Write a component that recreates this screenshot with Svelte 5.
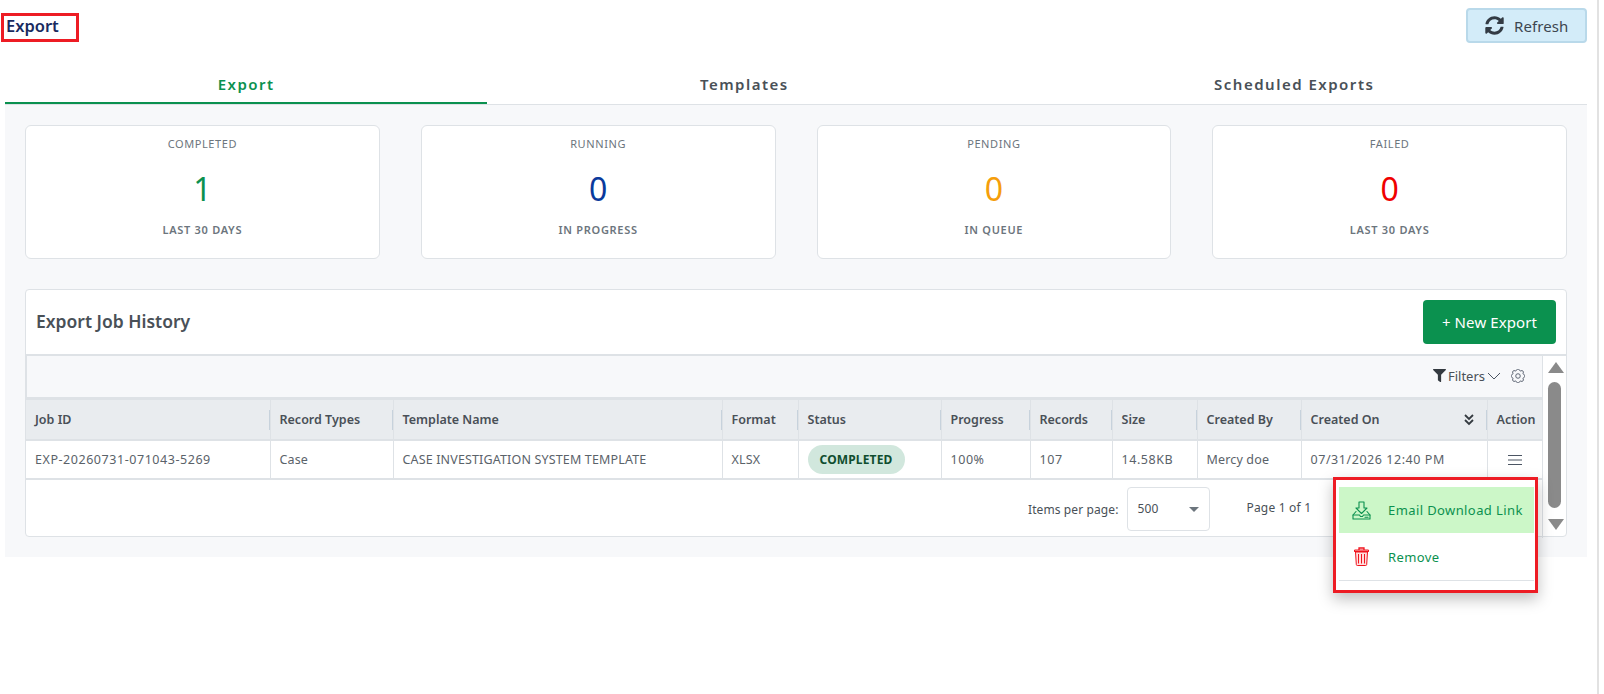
<script>
  const stats = [
    { label: 'Completed', value: 1, note: 'Last 30 days', color: '#0b914f' },
    { label: 'Running', value: 0, note: 'In progress', color: '#0a3a9c' },
    { label: 'Pending', value: 0, note: 'In queue', color: '#f59e0b' },
    { label: 'Failed', value: 0, note: 'Last 30 days', color: '#f00000' }
  ];
  const columns = [
    { name: 'Job ID', width: 244 },
    { name: 'Record Types', width: 123 },
    { name: 'Template Name', width: 329 },
    { name: 'Format', width: 76 },
    { name: 'Status', width: 143 },
    { name: 'Progress', width: 89 },
    { name: 'Records', width: 82 },
    { name: 'Size', width: 85 },
    { name: 'Created By', width: 104 },
    { name: 'Created On', width: 186, sort: true },
    { name: 'Action', width: 55 }
  ];
  const row = ['EXP-20260731-071043-5269', 'Case', 'CASE INVESTIGATION SYSTEM TEMPLATE', 'XLSX', null, '100%', '107', '14.58KB', 'Mercy doe', '07/31/2026 12:40 PM', 'menu'];
  const tabs = ['Export', 'Templates', 'Scheduled Exports'];
  // digits are narrower in this font than in the original, so these cells get some tracking
  const isNumeric = cell => /\d/.test(cell);
</script>

<div class="page">
  <header class="top">
    <h1 class="title">Export</h1>
    <button class="refresh">
      <svg width="19" height="19" viewBox="0 0 512 512"><path fill="#333b44" d="M370.72 133.28C339.458 104.008 298.888 87.962 255.848 88c-77.458.068-144.328 53.178-162.791 126.85-1.344 5.363-6.122 9.15-11.651 9.15H24.103c-7.498 0-13.194-6.807-11.807-14.176C33.933 94.924 134.813 8 256 8c66.448 0 126.791 26.136 171.315 68.685L463.03 40.97C478.149 25.851 504 36.559 504 57.941V192c0 13.255-10.745 24-24 24H345.941c-21.382 0-32.09-25.851-16.971-40.971l41.75-41.749zM32 296h134.059c21.382 0 32.09 25.851 16.971 40.971l-41.75 41.75c31.262 29.273 71.835 45.319 114.876 45.28 77.418-.07 144.315-53.144 162.787-126.849 1.344-5.363 6.122-9.15 11.651-9.15h57.304c7.498 0 13.194 6.807 11.807 14.176C478.067 417.076 377.187 504 256 504c-66.448 0-126.791-26.136-171.315-68.685L48.97 471.03C33.851 486.149 8 475.441 8 454.059V320c0-13.255 10.745-24 24-24z"/></svg>
      Refresh
    </button>
  </header>

  <nav class="tabs">
    {#each tabs as tab, i}
      <div class="tab" class:active={i === 0}>{tab}</div>
    {/each}
  </nav>

  <main class="body">
    <section class="stats">
      {#each stats as s}
        <div class="stat">
          <div class="stat-label">{s.label}</div>
          <div class="stat-value" style="color: {s.color}">{s.value}</div>
          <div class="stat-note">{s.note}</div>
        </div>
      {/each}
    </section>

    <section class="panel">
      <div class="panel-head">
        <h2>Export Job History</h2>
        <button class="new">+ New Export</button>
      </div>
      <div class="panel-main">
        <div class="grid">
          <div class="filterbar">
            <svg width="13" height="13" viewBox="0 0 512 512"><path fill="#343a40" d="M487.976 0H24.028C2.71 0-8.047 25.866 7.058 40.971L192 225.941V432c0 7.831 3.821 15.17 10.237 19.662l80 55.98C298.02 518.69 320 507.493 320 487.98V225.941l184.947-184.97C520.021 25.896 509.338 0 487.976 0z"/></svg>
            <span class="filters">Filters</span>
            <svg class="chev" width="14" height="8" viewBox="0 0 14 8"><path d="M1 1l6 6 6-6" fill="none" stroke="#4b5563" stroke-width="1"/></svg>
            <svg class="gear" width="14" height="14" viewBox="0 0 16 16" fill="none" stroke="#4b5563" stroke-width="1"><circle cx="8" cy="8" r="2.6"/><path d="M9.796 1.343c-.527-1.79-3.065-1.79-3.592 0l-.094.319a.873.873 0 0 1-1.255.52l-.292-.16c-1.64-.892-3.433.902-2.54 2.541l.159.292a.873.873 0 0 1-.52 1.255l-.319.094c-1.79.527-1.79 3.065 0 3.592l.319.094a.873.873 0 0 1 .52 1.255l-.16.292c-.892 1.64.901 3.434 2.541 2.54l.292-.159a.873.873 0 0 1 1.255.52l.094.319c.527 1.79 3.065 1.79 3.592 0l.094-.319a.873.873 0 0 1 1.255-.52l.292.16c1.64.893 3.434-.902 2.54-2.541l-.159-.292a.873.873 0 0 1 .52-1.255l.319-.094c1.79-.527 1.79-3.065 0-3.592l-.319-.094a.873.873 0 0 1-.52-1.255l.16-.292c.893-1.64-.902-3.433-2.541-2.54l-.292.159a.873.873 0 0 1-1.255-.52z"/></svg>
          </div>
          <table>
            <colgroup>
              {#each columns as c}<col style="width: {c.width}px" />{/each}
            </colgroup>
            <thead>
              <tr>
                {#each columns as c}
                  <th>
                    {c.name}
                    {#if c.sort}
                      <svg class="sort" width="12" height="13" viewBox="0 0 12 13" fill="none" stroke="#343a40" stroke-width="1.8"><path d="M2 2l4 4 4-4M2 7l4 4 4-4"/></svg>
                    {/if}
                  </th>
                {/each}
              </tr>
            </thead>
            <tbody>
              <tr>
                {#each row as cell}
                  {#if cell === null}
                    <td><span class="badge">COMPLETED</span></td>
                  {:else if cell === 'menu'}
                    <td class="action">
                      <svg width="14" height="12" viewBox="0 0 14 12" stroke="#4b5563" stroke-width="1"><path d="M0 1.500h14M0 6h14M0 10.500h14"/></svg>
                    </td>
                  {:else}
                    <td class:num={isNumeric(cell)}>{cell}</td>
                  {/if}
                {/each}
              </tr>
            </tbody>
          </table>
          <div class="pager">
            <span class="ipp">Items per page:</span>
            <div class="select">500<i class="caret"></i></div>
            <span class="range">Page 1 of 1</span>
          </div>
        </div>
        <div class="scroll">
          <i class="up"></i>
          <i class="thumb"></i>
          <i class="down"></i>
        </div>
      </div>
    </section>
  </main>

  <div class="menu-mark">
    <div class="menu">
      <div class="item on">
        <svg width="19" height="19" viewBox="0 0 19 19" fill="none" stroke="#0b914f" stroke-width="1.100" stroke-linejoin="round" stroke-linecap="round"><path d="M7 1h5v6h3l-5.500 5.500L4 7h3z"/><path d="M4 10.500L1 14v4h17v-4l-3-3.500"/><path d="M1 14h6.500l1 1.500h2l1-1.500H18"/><path d="M13 16.200h3"/></svg>
        Email Download Link
      </div>
      <div class="item">
        <svg width="19" height="19" viewBox="-1 0 19 19" fill="none" stroke="#f0141e" stroke-width="1"><path d="M1 4h15M6 3V1h5v2" stroke-width="1.300"/><path d="M1.500 3h14v1.500h-14z" fill="#fbb"/><path d="M2.500 5l.8 12.500q.1 1 1 1h8.400q.9 0 1-1L14.500 5z" fill="#fdd"/><path d="M5.500 7v9.500M8.500 7v9.500M11.500 7v9.500"/></svg>
        Remove
      </div>
    </div>
  </div>
  <div class="edge"></div>
</div>

<style>
  :global(body) {
    margin: 0;
    background: #fff;
    font-family: "Noto Sans", "Open Sans", sans-serif;
    color: #343a40;
  }
  .page {
    position: relative;
    height: 694px;
    overflow: hidden;
  }
  .edge {
    position: absolute;
    left: 1597px;
    top: 0;
    bottom: 0;
    width: 2px;
    background: #e2e2e2;
  }
  .top {
    display: flex;
    justify-content: space-between;
    align-items: flex-start;
    height: 64px;
    padding: 8px 17px 0 1px;
    box-sizing: border-box;
  }
  .title {
    box-sizing: border-box;
    width: 78px;
    height: 29px;
    margin: 5px 0 0;
    padding-left: 2px;
    border: 3px solid #ed1c24;
    font-size: 16.500px;
    line-height: 19px;
    font-weight: 600;
    color: #1a2b5f;
  }
  .refresh {
    display: flex;
    align-items: center;
    gap: 10px;
    box-sizing: border-box;
    width: 121px;
    height: 35px;
    padding: 0 0 0 17px;
    background: #d3ecf9;
    border: 2px solid #b9d9ea;
    border-radius: 4px;
    font: 15px "Noto Sans", sans-serif;
    letter-spacing: .1px;
    color: #3d4650;
  }
  .tabs {
    display: flex;
    margin: 0 17px 0 5px;
    height: 41px;
    border-bottom: 1px solid #dee2e6;
    box-sizing: border-box;
  }
  .tab {
    box-sizing: border-box;
    flex: 1 1 auto;
    text-align: center;
    padding-top: 10px;
    font-size: 15px;
    font-weight: 600;
    letter-spacing: 1.500px;
    color: #495057;
  }
  .tab.active {
    color: #0b914f;
    border-bottom: 2px solid #0b914f;
    height: 40px;
  }
  .body {
    margin: 0 17px 0 5px;
    height: 452px;
    padding: 20px;
    box-sizing: border-box;
    background: #f7f8fa;
  }
  .stats {
    display: grid;
    grid-template-columns: repeat(4, 1fr);
    gap: 41px;
  }
  .stat {
    box-sizing: border-box;
    height: 134px;
    padding-top: 11px;
    background: #fff;
    border: 1px solid #dee2e6;
    border-radius: 6px;
    text-align: center;
    text-transform: uppercase;
  }
  .stat-label {
    font-size: 11px;
    line-height: 14px;
    letter-spacing: .6px;
    color: #6c757d;
  }
  .stat-value {
    margin-top: 19px;
    font-size: 32px;
    line-height: 38px;
  }
  .stat-note {
    margin-top: 15px;
    font-size: 11px;
    line-height: 14px;
    font-weight: 600;
    letter-spacing: .7px;
    color: #6c757d;
  }
  .panel {
    box-sizing: border-box;
    height: 248px;
    margin-top: 30px;
    background: #fff;
    border: 1px solid #dee2e6;
    border-radius: 4px;
  }
  .panel-head {
    box-sizing: border-box;
    display: flex;
    justify-content: space-between;
    align-items: center;
    height: 66px;
    padding: 0 10px 1px 10px;
    border-bottom: 2px solid #dee2e6;
  }
  h2 {
    margin: -2px 0 0;
    font-size: 17.500px;
    font-weight: 600;
    color: #495057;
  }
  .new {
    width: 133px;
    height: 44px;
    background: #0b914f;
    border: 0;
    border-radius: 4px;
    color: #fff;
    font: 15px "Noto Sans", sans-serif;
    letter-spacing: .1px;
  }
  .panel-main {
    display: flex;
  }
  .grid {
    width: 1516px;
    position: relative;
  }
  .filterbar {
    box-sizing: border-box;
    display: flex;
    align-items: center;
    justify-content: flex-end;
    height: 44px;
    padding: 0 17px 2px 0;
    background: #f7f8fa;
    border-bottom: 3px solid #dee2e6;
    border-left: 1px solid #dee2e6;
    font-size: 13px;
    color: #495057;
  }
  .filters { margin-left: 2px; }
  .chev { margin-left: 2px; }
  .gear { margin-left: 10px; }
  table {
    width: 100%;
    table-layout: fixed;
    border-collapse: collapse;
  }
  th, td {
    box-sizing: border-box;
    padding: 0 8px 0 9px;
    text-align: left;
    font-size: 12.500px;
    white-space: nowrap;
    overflow: hidden;
  }
  th {
    position: relative;
    height: 40px;
    background: #e9ecef;
    font-weight: 600;
    color: #495057;
    border-bottom: 2px solid #dee2e6;
    border-right: 1px solid #dee2e6;
  }
  th:not(:last-child)::after {
    content: "";
    position: absolute;
    right: -1px;
    top: 10px;
    height: 20px;
    width: 2px;
    background: #c7d2dc;
  }
  th:last-child, td:last-child { border-right: 0; }
  td {
    height: 39px;
    color: #5a6269;
    letter-spacing: .15px;
    border-bottom: 2px solid #dee2e6;
    border-right: 1px solid #dee2e6;
  }
  td.num { letter-spacing: .55px; }
  .sort {
    position: absolute;
    right: 12px;
    top: 13px;
  }
  .badge {
    display: inline-block;
    width: 97px;
    height: 29px;
    line-height: 29px;
    text-align: center;
    border-radius: 15px;
    background: #d1e7dd;
    color: #0f4d2f;
    font-size: 12px;
    font-weight: 700;
    letter-spacing: .15px;
  }
  .action { text-align: center; padding: 0; }
  .action svg { display: block; margin: 0 auto; }
  .pager {
    display: flex;
    align-items: center;
    height: 58px;
    font-size: 12px;
    letter-spacing: .1px;
    color: #495057;
    padding-left: 1002px;
  }
  .select {
    position: relative;
    box-sizing: border-box;
    width: 83px;
    height: 44px;
    margin-left: 9px;
    padding-left: 9px;
    border: 1px solid #dee2e6;
    border-radius: 4px;
    line-height: 42px;
    background: #fff;
  }
  .caret {
    position: absolute;
    right: 10px;
    top: 19px;
    border: 5px solid transparent;
    border-top-color: #6c757d;
  }
  .range {
    margin: -4px 0 0 36px;
    letter-spacing: .2px;
  }
  .scroll {
    flex: 1;
    position: relative;
    border-left: 1px solid #dee2e6;
  }
  .up, .down, .thumb { position: absolute; display: block; left: 5px; }
  .up {
    top: 6px;
    border: 8px solid transparent;
    border-top: 0;
    border-bottom: 11px solid #8a8a8a;
  }
  .thumb {
    left: 5px;
    top: 26px;
    width: 13px;
    height: 126px;
    border-radius: 7px;
    background: #8a8a8a;
  }
  .down {
    top: 163px;
    border: 8px solid transparent;
    border-bottom: 0;
    border-top: 11px solid #8a8a8a;
  }
  .menu-mark {
    position: absolute;
    left: 1333px;
    top: 477px;
    box-sizing: border-box;
    width: 205px;
    height: 116px;
    padding: 0 1px 1px 3px;
    border: 3px solid #ed1c24;
    background: #fff;
    box-shadow: 0 6px 14px rgba(0, 0, 0, .25);
  }
  .menu {
    box-sizing: border-box;
    height: 100%;
    padding-top: 7px;
    background: #fff;
  }
  .item {
    display: flex;
    align-items: center;
    gap: 17px;
    height: 46px;
    padding-left: 13px;
    font-size: 13px;
    letter-spacing: .4px;
    color: #0b914f;
  }
  .item.on {
    background: #ccf7c8;
  }
  .item:last-child {
    height: 47px;
    border-bottom: 1px solid #dee2e6;
  }
</style>
